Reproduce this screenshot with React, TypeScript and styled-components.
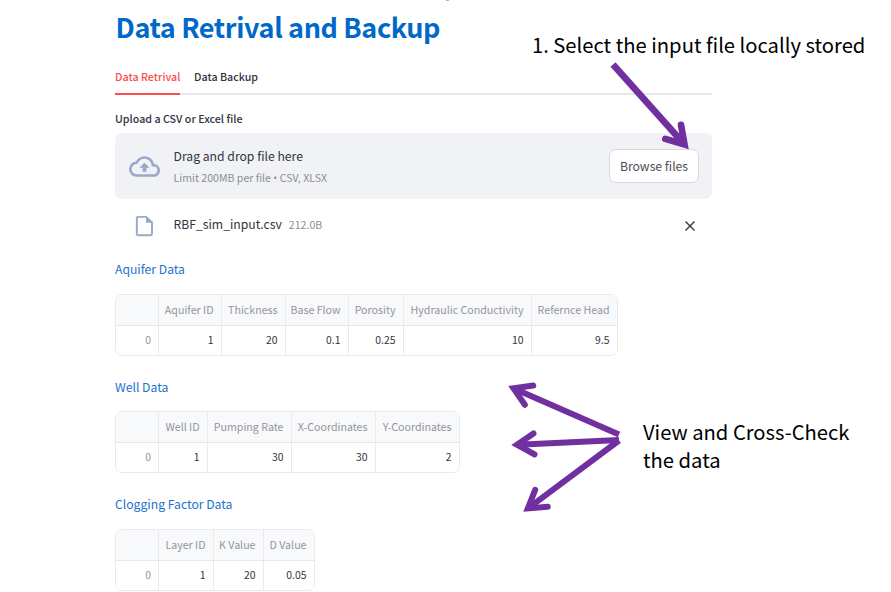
import React from 'react';
import styled, { createGlobalStyle } from 'styled-components';

const GlobalStyle = createGlobalStyle`
  * { box-sizing: border-box; }
  html, body { margin: 0; padding: 0; background: #fff; overflow: hidden; }
  body { font-family: "Noto Sans CJK SC", "Open Sans", sans-serif; color: #31333f; }
`;

const Page = styled.div`
  position: relative;
  width: 891px;
  height: 592px;
  overflow: hidden;
  background: #fff;
`;

const Main = styled.main`
  width: 597px;
  margin-left: 115px;
  display: flex;
  flex-direction: column;
`;

const Title = styled.h1`
  margin: 0;
  height: 56px;
  padding-left: 0.5px;
  font-size: 27px;
  line-height: 54px;
  font-weight: 700;
  letter-spacing: -0.38px;
  color: #0068c9;
  white-space: nowrap;
`;

const Tabs = styled.nav`
  display: flex;
  gap: 14px;
  height: 39px;
  border-bottom: 2px solid #e6e7ea;
`;

const Tab = styled.button<{ $active?: boolean; $width: number }>`
  width: ${p => p.$width}px;
  height: 39px;
  padding: 4px 0 0;
  border: 0;
  border-bottom: 2px solid ${p => (p.$active ? '#ff4b4b' : 'transparent')};
  background: none;
  color: ${p => (p.$active ? '#ff4b4b' : '#31333f')};
  font: 500 10.7px/33px "Noto Sans CJK SC", sans-serif;
  text-align: left;
  white-space: nowrap;
`;

const FieldLabel = styled.label`
  height: 38px;
  padding-top: 15px;
  font-size: 10.7px;
  line-height: 18px;
  font-weight: 500;
`;

const Dropzone = styled.section`
  display: flex;
  align-items: center;
  height: 66px;
  padding: 0 13px 0 14px;
  border-radius: 7px;
  background: #f0f2f6;
`;

const DropText = styled.div`
  flex: 1;
  margin-left: 13.5px;
  padding-top: 2px;
`;

const DropTitle = styled.div`
  font-size: 12.2px;
  line-height: 22px;
`;

const DropHint = styled.div`
  font-size: 10.6px;
  line-height: 22px;
  color: #8b8d96;
`;

const Bullet = styled.span`
  font-family: "Open Sans", sans-serif;
`;

const BrowseButton = styled.button`
  width: 90px;
  height: 34px;
  padding: 0;
  border: 1px solid #d8d9de;
  border-radius: 7px;
  background: #fff;
  color: #4b4d57;
  font: 400 12.2px/30px "Noto Sans CJK SC", sans-serif;
`;

const FileRow = styled.div`
  display: flex;
  align-items: center;
  height: 54px;
  padding: 0 16px 0 20px;
`;

const FileMeta = styled.div`
  flex: 1;
  display: flex;
  align-items: baseline;
  gap: 7px;
  margin: 0 0 4px 19.5px;
  line-height: 20px;
`;

const FileName = styled.span`
  font-size: 12.2px;
`;

const FileSize = styled.span`
  font-size: 10.6px;
  color: #8b8d96;
`;

const DataSection = styled.section`
  height: 117.3px;
`;

const SectionTitle = styled.h2`
  margin: 0;
  height: 41px;
  padding-top: 6.3px;
  font-size: 12.2px;
  line-height: 20px;
  font-weight: 400;
  color: #1b72cc;
`;

const Table = styled.div<{ $columns: string }>`
  display: grid;
  grid-template-columns: ${p => p.$columns};
  grid-template-rows: 31px 29px;
  width: max-content;
  border: 1px solid #e9eaed;
  border-radius: 7px;
  overflow: hidden;
`;

const Cell = styled.div<{ $head?: boolean; $index?: boolean }>`
  padding-right: ${p => (p.$index ? '7px' : '7.5px')};
  border-left: ${p => (p.$index ? '0' : '1px solid #e9eaed')};
  border-bottom: ${p => (p.$head ? '1px solid #e6e7ea' : '0')};
  background: ${p => (p.$head ? '#f8f9fb' : '#fff')};
  color: ${p => (p.$head || p.$index ? '#93959c' : '#31333f')};
  font-size: ${p => (p.$head ? '10.65px' : '10.4px')};
  line-height: ${p => (p.$head ? '30px' : '28px')};
  text-align: right;
  white-space: nowrap;
`;

const Callout = styled.p<{ $x: number; $y: number }>`
  position: absolute;
  left: ${p => p.$x}px;
  top: ${p => p.$y}px;
  margin: 0;
  font-size: 20.2px;
  line-height: 28px;
  color: #000;
  white-space: pre;
`;

const ArrowLayer = styled.svg`
  position: absolute;
  inset: 0;
  pointer-events: none;
`;

const CloudUpload = () => (
  <svg width="31" height="31" viewBox="0 0 24 24" fill="#98a8c7">
    <path d="M19.35 10.04A7.49 7.49 0 0 0 12 4C9.11 4 6.6 5.64 5.35 8.04A5.994 5.994 0 0 0 0 14c0 3.31 2.69 6 6 6h13c2.76 0 5-2.24 5-5 0-2.64-2.05-4.78-4.65-4.96zM19 18H6c-2.21 0-4-1.79-4-4 0-2.05 1.53-3.76 3.56-3.97l1.07-.11.5-.95A5.469 5.469 0 0 1 12 6c2.62 0 4.88 1.86 5.39 4.43l.3 1.5 1.53.11A2.98 2.98 0 0 1 22 15c0 1.65-1.35 3-3 3zM8 13h2.55v3h2.9v-3H16l-4-4z" />
  </svg>
);

const FileIcon = () => (
  <svg width="19" height="22" viewBox="0 0 19 22">
    <path d="M3 1.9h8.2L17 7.3v11.8a1.2 1.2 0 0 1-1.2 1.2H3a1.2 1.2 0 0 1-1.2-1.2V3.1A1.2 1.2 0 0 1 3 1.9z" fill="none" stroke="#98a8c7" strokeWidth="1.9" />
    <path d="M11 1.5V7.7h6.2z" fill="#98a8c7" />
  </svg>
);

const CloseIcon = () => (
  <svg width="12" height="12" viewBox="0 0 12 12">
    <path d="M1.5 1.5l9 9M10.5 1.5l-9 9" stroke="#31333f" strokeWidth="1.4" />
  </svg>
);

type Dataset = { title: string; columns: string; heads: string[]; values: string[] };

const datasets: Dataset[] = [
  {
    title: 'Aquifer Data',
    columns: '42px 63px 64px 63px 55px 128px 86px',
    heads: ['Aquifer ID', 'Thickness', 'Base Flow', 'Porosity', 'Hydraulic Conductivity', 'Refernce Head'],
    values: ['1', '20', '0.1', '0.25', '10', '9.5'],
  },
  {
    title: 'Well Data',
    columns: '42px 49px 84px 84px 84px',
    heads: ['Well ID', 'Pumping Rate', 'X-Coordinates', 'Y-Coordinates'],
    values: ['1', '30', '30', '2'],
  },
  {
    title: 'Clogging Factor Data',
    columns: '42px 55px 50px 51px',
    heads: ['Layer ID', 'K Value', 'D Value'],
    values: ['1', '20', '0.05'],
  },
];

type ArrowProps = { from: [number, number]; tip: [number, number]; weight?: number };

/* Open arrowhead with rounded barbs and a mitred point. */
const Arrow = ({ from, tip, weight = 6 }: ArrowProps) => {
  const dx = tip[0] - from[0];
  const dy = tip[1] - from[1];
  const length = Math.hypot(dx, dy);
  const angle = (Math.atan2(dy, dx) * 180) / Math.PI;
  return (
    <g transform={`translate(${from[0]} ${from[1]}) rotate(${angle})`} fill="none" stroke="#7030a0" strokeWidth={weight}>
      <path d={`M0 0H${length - 7}`} />
      <path d={`M${length - 23} -10.5L${length - 6} 0L${length - 23} 10.5`} strokeLinecap="round" strokeLinejoin="miter" />
    </g>
  );
};

export default function App() {
  return (
    <Page>
      <GlobalStyle />
      <Main>
        <Title>Data Retrival and Backup</Title>
        <Tabs>
          <Tab $active $width={65}>Data Retrival</Tab>
          <Tab $width={65}>Data Backup</Tab>
        </Tabs>
        <FieldLabel>Upload a CSV or Excel file</FieldLabel>
        <Dropzone>
          <CloudUpload />
          <DropText>
            <DropTitle>Drag and drop file here</DropTitle>
            <DropHint>Limit 200MB per file <Bullet>•</Bullet> CSV, XLSX</DropHint>
          </DropText>
          <BrowseButton>Browse files</BrowseButton>
        </Dropzone>
        <FileRow>
          <FileIcon />
          <FileMeta>
            <FileName>RBF_sim_input.csv</FileName>
            <FileSize>212.0B</FileSize>
          </FileMeta>
          <CloseIcon />
        </FileRow>
        {datasets.map(d => (
          <DataSection key={d.title}>
            <SectionTitle>{d.title}</SectionTitle>
            <Table $columns={d.columns}>
              <Cell $head $index />
              {d.heads.map(h => <Cell $head key={h}>{h}</Cell>)}
              <Cell $index>0</Cell>
              {d.values.map((v, i) => <Cell key={d.heads[i]}>{v}</Cell>)}
            </Table>
          </DataSection>
        ))}
      </Main>
      <ArrowLayer width="891" height="592" viewBox="0 0 891 592">
        <ellipse cx="447.5" cy="-0.5" rx="2" ry="1.5" fill="#aaa" />
        <Arrow from={[613, 64.5]} tip={[688.5, 149]} weight={6.7} />
        <Arrow from={[619, 434.5]} tip={[508, 386]} />
        <Arrow from={[619, 440]} tip={[511, 445]} />
        <Arrow from={[619, 440.5]} tip={[523, 512]} />
      </ArrowLayer>
      <Callout $x={532} $y={31}>1. Select the input file locally stored</Callout>
      <Callout $x={643} $y={418}>{'View and Cross-Check\nthe data'}</Callout>
    </Page>
  );
}
